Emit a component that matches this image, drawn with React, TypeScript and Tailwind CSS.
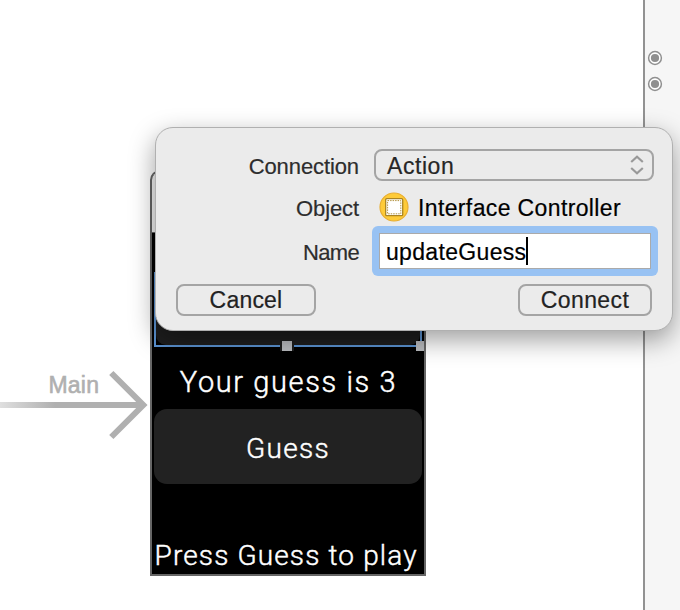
import type { ReactNode } from "react";

const helv = "font-['Liberation_Sans',Arial,sans-serif]";
const watch = "font-[Roboto,sans-serif] font-light [-webkit-text-stroke:0.45px_#fff] text-white whitespace-nowrap";

function OutletDot() {
  return (
    <svg width="16" height="16" viewBox="0 0 16 16" className="block">
      <circle cx="8" cy="8" r="6.4" fill="#fff" stroke="#909090" strokeWidth="1.5" />
      <circle cx="8" cy="8" r="4.1" fill="#8f8f8f" />
    </svg>
  );
}

function Row({ label, children, className, labelClass }: { label: string; children: ReactNode; className: string; labelClass: string }) {
  return (
    <div className={`flex items-center ${className}`}>
      <span className={`w-[203px] shrink-0 text-right text-[22px] leading-none text-[#2d2d2d] [-webkit-text-stroke:0.2px_#2d2d2d] ${labelClass}`}>{label}</span>
      {children}
    </div>
  );
}

function EntryArrow() {
  return (
    <div className="absolute left-0 top-[370px] h-[70px] w-[150px]">
      <svg width="150" height="70" viewBox="0 0 150 70" className="absolute left-0 top-0">
        <defs>
          <linearGradient id="tail" gradientUnits="userSpaceOnUse" x1="-20" y1="0" x2="55" y2="0">
            <stop offset="0" stopColor="#f0f0f0" />
            <stop offset="1" stopColor="#b0b0b0" />
          </linearGradient>
        </defs>
        <rect x="0" y="32" width="143" height="6" fill="url(#tail)" />
        <path d="M111.3 3 L143.3 35 L111.3 67" fill="none" stroke="#b0b0b0" strokeWidth="6" />
      </svg>
      <span className="absolute left-[48.5px] top-[3px] text-[23px] leading-[24px] tracking-[0.2px] text-[#b0b0b0] [-webkit-text-stroke:0.6px_#b0b0b0]">Main</span>
    </div>
  );
}

function WatchScene() {
  return (
    <div className="absolute left-[150px] top-[170px] flex h-[406px] w-[276px] flex-col overflow-hidden rounded-t-[10px] border-2 border-[#666] bg-black">
      <div className="h-[61px] shrink-0 border-b border-[#666] bg-[#f3f3f3]" />
      <div className="relative mt-[39px] ml-[2px] h-[75px] w-[268px] shrink-0 border-2 border-[#5b93d2] bg-black">
        <div className="h-full w-full rounded-[10px] bg-[#1e1e1e]" />
        <span className="absolute bottom-[-6px] left-[124px] h-[12px] w-[14px] border-x-2 border-t-2 border-[#1e1e1e] bg-[#bbbdc0]" />
        <span className="absolute right-[-4px] bottom-[-6px] h-[10px] w-[8px] bg-[#bbbdc0]" />
      </div>
      <div className={`mt-[16px] pl-[1px] text-center text-[29px] leading-[38px] tracking-[1.6px] ${watch}`}>Your guess is 3</div>
      <div className={`mt-[8px] ml-[2px] flex h-[75px] w-[268px] shrink-0 items-center justify-center rounded-[13px] bg-[#222] pt-[5px] text-[28px] tracking-[1.3px] ${watch}`}>Guess</div>
      <div className={`mt-[53px] pl-[2.5px] text-[28px] leading-[38px] tracking-[1.14px] ${watch}`}>Press Guess to play</div>
    </div>
  );
}

function ConnectionPopover() {
  return (
    <div className="absolute left-[155px] top-[127px] flex h-[204px] w-[518px] flex-col rounded-[18px] border border-[#b0b0b0] bg-[#ebebeb] shadow-[0_9px_26px_rgba(0,0,0,0.38)]">
      <Row label="Connection" className="mt-[21px] h-[32px]" labelClass="pt-[3px] tracking-[-0.1px]">
        <div className="ml-[15px] flex h-[32px] w-[280px] items-center justify-between rounded-[8px] border-2 border-[#a4a4a4] pr-[8px] pl-[11px]">
          <span className="pt-[2px] text-[23px] leading-none tracking-[0.55px] text-[#262626] [-webkit-text-stroke:0.2px_#262626]">Action</span>
          <svg width="14" height="20" viewBox="0 0 14 20" fill="none" stroke="#999" strokeWidth="2.2">
            <path d="M1.2 7 L7 1.8 L12.8 7 M1.2 13 L7 18.2 L12.8 13" />
          </svg>
        </div>
      </Row>
      <Row label="Object" className="mt-[11px] h-[32px]" labelClass="pt-px tracking-[-0.1px]">
        <svg width="30" height="30" viewBox="0 0 30 30" className="mb-[2px] ml-[20px]">
          <circle cx="15" cy="15" r="14" fill="#fecb38" stroke="#e8ae32" strokeWidth="1.2" />
          <rect x="6.7" y="6.7" width="17" height="17" rx="1" fill="#fff" stroke="#aa8422" strokeWidth="1.3" />
          <rect x="8.6" y="8.6" width="13.2" height="13.2" fill="none" stroke="#b39341" strokeWidth="1" strokeDasharray="1.5 1" />
        </svg>
        <span className="ml-[9px] text-[23px] leading-none tracking-[0.37px] text-black [-webkit-text-stroke:0.2px_#000]">Interface Controller</span>
      </Row>
      <Row label="Name" className="mt-[2px] h-[50px]" labelClass="pt-[3px] tracking-[-0.65px]">
        <div className="ml-[13px] h-[50px] w-[286px] rounded-[6px] bg-[#98c2f3] p-[7px]">
          <div className="flex h-[36px] items-center border border-[#aaa] bg-white pl-[6px]">
            <span className="pt-[2px] text-[23px] leading-none tracking-[0.33px] text-black [-webkit-text-stroke:0.2px_#000]">updateGuess</span>
            <span className="h-[28px] w-[2px] bg-black" />
          </div>
        </div>
      </Row>
      <div className="mt-[8px] flex justify-between px-[20px] text-[23px] leading-none text-[#222] [-webkit-text-stroke:0.2px_#222]">
        <div className="flex h-[32px] w-[140px] items-center justify-center rounded-[8px] border-2 border-[#a4a4a4] tracking-[0.2px]">Cancel</div>
        <div className="flex h-[32px] w-[134px] items-center justify-center rounded-[8px] border-2 border-[#a4a4a4] tracking-[0.4px]">Connect</div>
      </div>
    </div>
  );
}

export default function App() {
  return (
    <div className={`relative flex h-[610px] w-[680px] overflow-hidden bg-white ${helv}`}>
      <main className="flex-1" />
      <aside className="flex w-[37px] flex-col gap-[10px] border-l-2 border-[#929292] bg-[#f6f6f6] pt-[50px] pl-[2px]">
        <OutletDot />
        <OutletDot />
      </aside>
      <EntryArrow />
      <WatchScene />
      <ConnectionPopover />
    </div>
  );
}
